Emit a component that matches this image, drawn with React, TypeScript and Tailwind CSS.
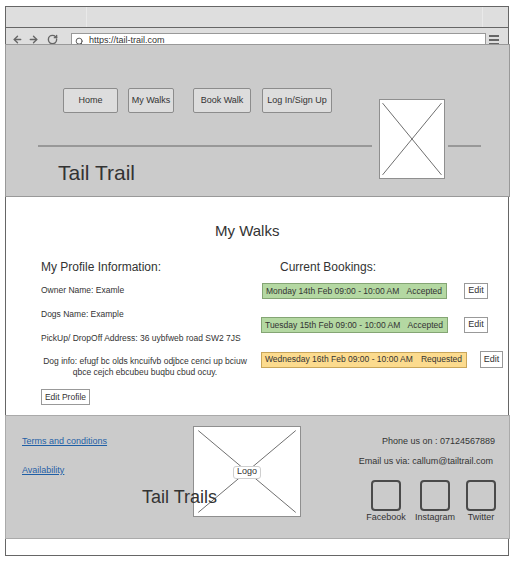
import { ArrowLeft, ArrowRight, RotateCw, Search } from "lucide-react";

const font = { fontFamily: '"Liberation Sans", Arial, sans-serif' };

function Placeholder({ className }: { className: string }) {
  return (
    <div className={`relative bg-white border border-[#8f8f8f] ${className}`}>
      <svg className="absolute inset-0 w-full h-full" preserveAspectRatio="none" viewBox="0 0 100 100">
        <line x1="4" y1="4" x2="96" y2="96" stroke="#6f6f6f" strokeWidth="1" vectorEffect="non-scaling-stroke" />
        <line x1="96" y1="4" x2="4" y2="96" stroke="#6f6f6f" strokeWidth="1" vectorEffect="non-scaling-stroke" />
      </svg>
    </div>
  );
}

function NavButton({ label, w, ml }: { label: string; w: string; ml: string }) {
  return (
    <div
      className={`${w} ${ml} h-[25px] flex items-center justify-center rounded-[2px] bg-[#dddddd] border border-[#8c8c8c] text-[9px] text-[#333]`}
    >
      {label}
    </div>
  );
}

function Booking({
  when,
  status,
  w,
  tone,
  editMl,
  mt,
  tall,
}: {
  when: string;
  status: string;
  w: string;
  tone: "green" | "yellow";
  editMl: string;
  mt: string;
  tall?: boolean;
}) {
  const box =
    tone === "green" ? "bg-[#b4d8a2] border-[#84a574]" : "bg-[#fcdb8e] border-[#c9a65a]";
  return (
    <div className={`flex items-center ${mt}`}>
      <div className={`${w} h-[16px] border ${box} flex items-center justify-between pl-[3px] pr-[4px] text-[8.5px] text-[#333]`}>
        <span>{when}</span>
        <span>{status}</span>
      </div>
      <div
        className={`${editMl} ${tall ? "w-[23px] h-[17px]" : "w-[24px] h-[16px]"} bg-white border border-[#999] flex items-center justify-center text-[9px] text-[#333]`}
      >
        Edit
      </div>
    </div>
  );
}

function Social({ label, ml }: { label: string; ml: string }) {
  return (
    <div className={`${ml} w-[40px] flex flex-col items-center`}>
      <div className="w-[30px] h-[31px] rounded-[4px] border-2 border-[#4a4a4a]" />
      <div className="mt-[2px] text-[9px] leading-none text-[#333]">{label}</div>
    </div>
  );
}

export default function App() {
  return (
    <div className="w-[516px] h-[562px] bg-white pt-[6px] pl-[5px] overflow-hidden" style={font}>
      <div className="w-[504px] h-[550px] border border-[#666] flex flex-col">
        {/* browser chrome */}
        <div className="h-[21px] bg-[#dedede] border-b border-[#666] flex">
          <div className="w-[81px] border-r border-[#e9e9e9]" />
          <div className="w-[396px] border-r border-[#e9e9e9]" />
        </div>
        <div className="h-[16px] bg-[#dedede] flex items-start overflow-hidden">
          <div className="flex items-center gap-[5px] ml-[6px] mt-[6px] text-[#666]">
            <ArrowLeft size={11} strokeWidth={3} />
            <ArrowRight size={11} strokeWidth={3} />
            <RotateCw size={11} strokeWidth={3} className="ml-[3px]" />
          </div>
          <div className="ml-[13px] mt-[5px] w-[415px] h-[16px] bg-white border border-[#999] flex items-center">
            <Search size={9} strokeWidth={2.5} className="ml-[3px] text-[#555]" />
            <span className="ml-[5px] text-[9px] text-[#333]">https://tail-trail.com</span>
          </div>
          <div className="ml-[3px] mt-[7px] flex flex-col gap-[2px]">
            <div className="w-[10px] h-[2px] bg-[#666]" />
            <div className="w-[10px] h-[2px] bg-[#666]" />
            <div className="w-[10px] h-[2px] bg-[#666]" />
          </div>
        </div>

        {/* header */}
        <div className="-ml-px w-[505px] h-[153px] shrink-0 bg-[#cbcbcb] border border-[#999] flex">
          <div className="w-[366px] pl-[32px]">
            <div className="flex mt-[43px] ml-[25px]">
              <NavButton label="Home" w="w-[55px]" ml="ml-0" />
              <NavButton label="My Walks" w="w-[46px]" ml="ml-[10px]" />
              <NavButton label="Book Walk" w="w-[58px]" ml="ml-[19px]" />
              <NavButton label="Log In/Sign Up" w="w-[70px]" ml="ml-[11px]" />
            </div>
            <div className="mt-[32px] h-[2px] bg-[#989898]" />
            <div className="mt-[15px] ml-[20px] text-[21px] leading-none text-[#333]">Tail Trail</div>
          </div>
          <Placeholder className="ml-[7px] mt-[54px] w-[66px] h-[80px]" />
          <div className="ml-[3px] mt-[100px] w-[33px] h-[2px] bg-[#989898]" />
        </div>

        {/* main */}
        <div className="h-[218px] shrink-0 text-[#333]">
          <div className="mt-[26px] pl-[209px] text-[15px] leading-none">My Walks</div>
          <div className="flex mt-[23px]">
            <div className="w-[255px] pl-[35px]">
              <div className="text-[12px] leading-none">My Profile Information:</div>
              <div className="flex flex-col gap-[15px] mt-[13px] text-[8.5px] leading-[9px]">
                <div>Owner Name: Examle</div>
                <div>Dogs Name: Example</div>
                <div>PickUp/ DropOff Address: 36 uybfweb road SW2 7JS</div>
                <div className="w-[208px] text-center leading-[11px] -mt-[2px]">
                  Dog info: efugf bc olds kncuifvb odjbce cenci up bciuw qbce cejch ebcubeu buqbu cbud ocuy.
                </div>
              </div>
              <div className="mt-[11px] w-[49px] h-[16px] bg-white border border-[#999] flex items-center justify-center text-[8.5px]">
                Edit Profile
              </div>
            </div>
            <div className="flex-1">
              <div className="ml-[19px] text-[12px] leading-none">Current Bookings:</div>
              <Booking
                when="Monday 14th Feb 09:00 - 10:00 AM"
                status="Accepted"
                w="w-[185px] ml-px"
                tone="green"
                editMl="ml-[17px]"
                mt="mt-[10px]"
              />
              <Booking
                when="Tuesday 15th Feb 09:00 - 10:00 AM"
                status="Accepted"
                w="w-[187px]"
                tone="green"
                editMl="ml-[16px]"
                mt="mt-[18px]"
              />
              <Booking
                when="Wednesday 16th Feb 09:00 - 10:00 AM"
                status="Requested"
                w="w-[206px]"
                tone="yellow"
                editMl="ml-[13px]"
                mt="mt-[18px]"
                tall
              />
            </div>
          </div>
        </div>

        {/* footer */}
        <div className="-ml-px w-[505px] h-[124px] shrink-0 bg-[#cbcbcb] border border-[#aaa] flex text-[#333]">
          <div className="w-[187px] pl-[16px] flex flex-col">
            <a className="mt-[21px] text-[9px] leading-none text-[#1f5fa6] underline">Terms and conditions</a>
            <a className="mt-[20px] text-[9px] leading-none text-[#1f5fa6] underline">Availability</a>
          </div>
          <div className="relative mt-[10px] w-[108px] h-[91px]">
            <Placeholder className="w-full h-full" />
            <div className="absolute inset-0 flex items-center justify-center">
              <div className="mt-[1px] px-[3px] h-[13px] flex items-center bg-white border border-[#cfcfcf] rounded-[3px] text-[9px]">
                Logo
              </div>
            </div>
            <div className="absolute left-[-51px] top-[62px] text-[18px] leading-none whitespace-nowrap">Tail Trails</div>
          </div>
          <div className="flex-1 flex flex-col items-end pr-[14px]">
            <div className="mt-[21px] text-[9px] leading-none">Phone us on : 07124567889</div>
            <div className="mt-[11px] mr-[2px] text-[9px] leading-none">Email us via: callum@tailtrail.com</div>
            <div className="mt-[14px] mr-[-6px] flex">
              <Social label="Facebook" ml="ml-0" />
              <Social label="Instagram" ml="ml-[9px]" />
              <Social label="Twitter" ml="ml-[6px]" />
            </div>
          </div>
        </div>
        <div className="flex-1" />
      </div>
    </div>
  );
}
